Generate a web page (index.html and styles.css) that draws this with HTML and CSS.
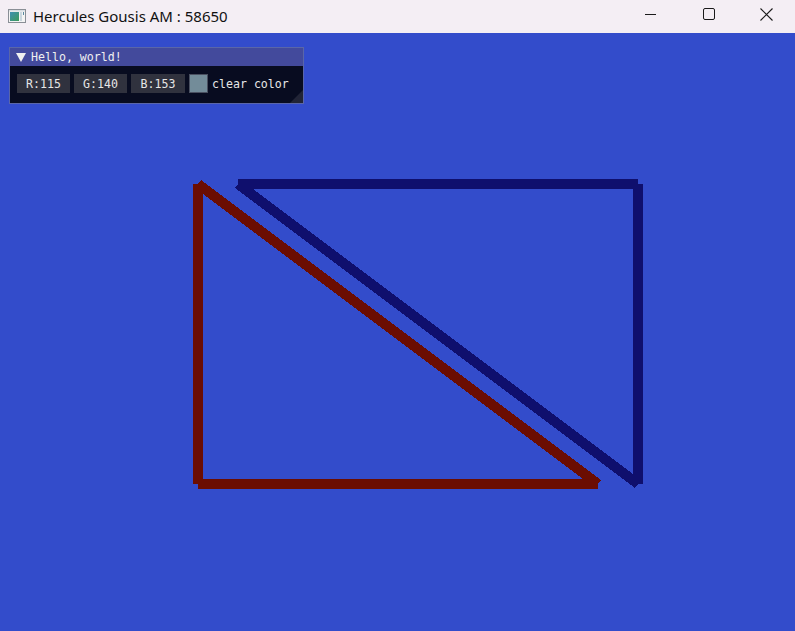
FILE: index.html
```html
<!DOCTYPE html>
<html>
<head>
<meta charset="utf-8">
<link rel="stylesheet" href="styles.css">
</head>
<body>
<div class="app">
  <header class="titlebar">
    <svg class="app-icon" width="18" height="14" viewBox="0 0 18 14">
      <defs>
        <linearGradient id="g" x1="0" y1="0" x2="1" y2="1">
          <stop offset="0" stop-color="#3f8fb3"/>
          <stop offset="1" stop-color="#3c9a5a"/>
        </linearGradient>
      </defs>
      <rect x="0.5" y="0.5" width="17" height="13" fill="#f4f4f4" stroke="#8a8f96"/>
      <rect x="2" y="3" width="9" height="9" fill="url(#g)"/>
      <rect x="12" y="3" width="2" height="9" fill="#c9d6de"/>
      <rect x="15" y="3" width="1" height="3" fill="#5a8aa0"/>
      <rect x="1" y="1" width="16" height="1.5" fill="#d8dde2"/>
    </svg>
    <span class="title">Hercules Gousis AM : 58650</span>
    <div class="controls">
      <div class="ctl">
        <svg width="12" height="12" viewBox="0 0 12 12"><line x1="0" y1="6.5" x2="11" y2="6.5" stroke="#1a1a1a" stroke-width="1"/></svg>
      </div>
      <div class="ctl">
        <svg width="12" height="12" viewBox="0 0 12 12"><rect x="0.5" y="0.5" width="11" height="11" rx="1.5" fill="none" stroke="#1a1a1a" stroke-width="1"/></svg>
      </div>
      <div class="ctl close">
        <svg width="13" height="13" viewBox="0 0 13 13"><path d="M0.5 0.5 L12.5 12.5 M12.5 0.5 L0.5 12.5" stroke="#1a1a1a" stroke-width="1.1" fill="none"/></svg>
      </div>
    </div>
  </header>
  <main class="canvas">
    <svg class="scene" width="795" height="598" viewBox="0 0 795 598" shape-rendering="crispEdges">
      <g stroke="#6b0d02" stroke-width="10" fill="none">
        <line x1="198" y1="151" x2="198" y2="451"/>
        <line x1="198" y1="451" x2="598" y2="451"/>
        <line x1="198" y1="151" x2="598" y2="451"/>
      </g>
      <g stroke="#0f0f6d" stroke-width="10" fill="none">
        <line x1="238" y1="151" x2="638" y2="151"/>
        <line x1="638" y1="151" x2="638" y2="451"/>
        <line x1="238" y1="151" x2="638" y2="451"/>
      </g>
    </svg>
    <section class="imgui">
      <div class="ig-title">
        <svg class="arrow" width="10" height="9" viewBox="0 0 10 9"><polygon points="0,0 10,0 5,9" fill="#f0f0f0"/></svg>
        <span>Hello, world!</span>
      </div>
      <div class="ig-body">
        <span class="field f1">R:115</span>
        <span class="field f2">G:140</span>
        <span class="field f3">B:153</span>
        <span class="swatch"></span>
        <span class="label">clear color</span>
      </div>
      <div class="grip"></div>
    </section>
  </main>
</div>
</body>
</html>
```

FILE: styles.css
```css
html, body {
  margin: 0;
  padding: 0;
  width: 795px;
  height: 631px;
  overflow: hidden;
}
.app {
  display: flex;
  flex-direction: column;
  width: 795px;
  height: 631px;
}
.titlebar {
  height: 33px;
  flex: 0 0 33px;
  background: #f4eef4;
  display: flex;
  align-items: center;
  font-family: "Segoe UI", "Noto Sans", "Liberation Sans", sans-serif;
  font-size: 15px;
  color: #111;
}
.app-icon {
  margin-left: 8px;
  margin-top: -1px;
}
.title {
  margin-left: 7px;
  margin-top: -1px;
}
.controls {
  margin-left: auto;
  display: flex;
  height: 100%;
}
.ctl {
  width: 58px;
  height: 100%;
  display: flex;
  align-items: center;
  justify-content: center;
  padding-bottom: 5px;
  box-sizing: border-box;
}
.ctl.close {
  width: 57px;
}
.canvas {
  position: relative;
  flex: 1;
  background: #334ccb;
}
.scene {
  display: block;
}
.imgui {
  position: absolute;
  left: 9px;
  top: 14px;
  width: 293px;
  border: 1px solid #5a66a8;
  background: #080c20;
  font-family: "DejaVu Sans Mono", "Liberation Mono", monospace;
  font-size: 11.6px;
  color: #e6e6e6;
}
.ig-title {
  height: 18px;
  background: #434a9c;
  display: flex;
  align-items: center;
  padding-left: 6px;
  gap: 5px;
  color: #f0f0f0;
}
.arrow {
  display: block;
}
.ig-body {
  display: flex;
  align-items: center;
  gap: 4px;
  padding: 8px 7px 10px 7px;
  height: 19px;
}
.field {
  height: 19px;
  background: #30323e;
  display: flex;
  align-items: center;
  justify-content: center;
  width: 53px;
}
.f3 {
  width: 54px;
}
.swatch {
  width: 17px;
  height: 17px;
  background: #738c99;
  border: 1px solid #4a5060;
}
.label {
  margin-left: 0;
  letter-spacing: 0;
}
.grip {
  position: absolute;
  right: 0;
  bottom: 0;
  width: 0;
  height: 0;
  border-style: solid;
  border-width: 0 0 13px 13px;
  border-color: transparent transparent #212436 transparent;
}
```
